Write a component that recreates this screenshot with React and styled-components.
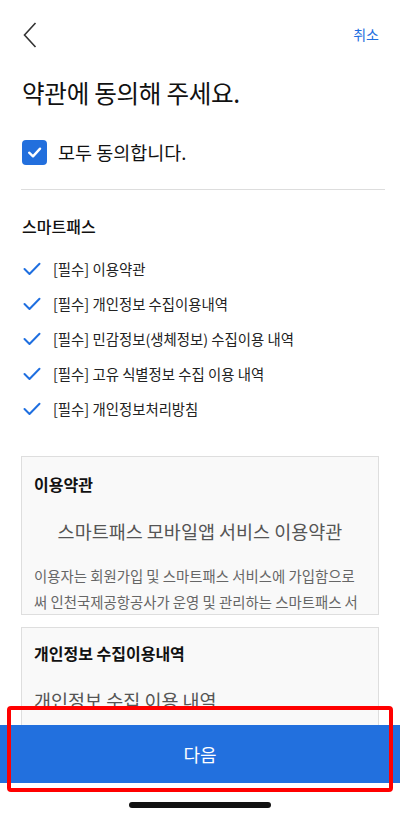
import styled, { createGlobalStyle } from 'styled-components';

const GlobalStyle = createGlobalStyle`
  html, body {
    margin: 0;
    padding: 0;
    background: #ffffff;
  }
  body {
    font-family: 'Noto Sans CJK KR', 'Noto Sans', sans-serif;
    color: #111;
  }
  * {
    box-sizing: border-box;
  }
`;

const terms = [
  '[필수] 이용약관',
  '[필수] 개인정보 수집이용내역',
  '[필수] 민감정보(생체정보) 수집이용 내역',
  '[필수] 고유 식별정보 수집 이용 내역',
  '[필수] 개인정보처리방침',
];

const BackIcon = () => (
  <svg width="14" height="26" viewBox="0 0 14 26" fill="none">
    <path d="M12.5 1 L1.5 13 L12.5 25" stroke="#333" strokeWidth="1.6" />
  </svg>
);

const CheckMark = ({ color = '#fff', size = 14 }) => (
  <svg width={size} height={size} viewBox="0 0 14 14" fill="none">
    <path
      d="M2 7.2 L5.6 10.6 L12.2 3.4"
      stroke={color}
      strokeWidth="2.2"
      strokeLinecap="round"
      strokeLinejoin="round"
    />
  </svg>
);

const App = () => {
  return (
    <>
      <GlobalStyle />
      <Page>
        <Content>
          <TopBar>
            <BackButton>
              <BackIcon />
            </BackButton>
            <Cancel>취소</Cancel>
          </TopBar>

          <Title>약관에 동의해 주세요.</Title>

          <AllAgree>
            <CheckBox>
              <CheckMark size={15} />
            </CheckBox>
            <AllLabel>모두 동의합니다.</AllLabel>
          </AllAgree>

          <Divider />

          <SectionTitle>스마트패스</SectionTitle>
          <TermList>
            {terms.map((t) => (
              <TermRow key={t}>
                <TickIcon>
                  <svg width="18" height="14" viewBox="0 0 18 14" fill="none">
                    <path
                      d="M1.5 7 L6.5 12 L16.5 1.8"
                      stroke="#1f6fe0"
                      strokeWidth="2"
                      strokeLinecap="round"
                      strokeLinejoin="round"
                    />
                  </svg>
                </TickIcon>
                <TermText>{t}</TermText>
              </TermRow>
            ))}
          </TermList>

          <Card>
            <CardTitle>이용약관</CardTitle>
            <CardHeading $center>스마트패스 모바일앱 서비스 이용약관</CardHeading>
            <CardBody>
              이용자는 회원가입 및 스마트패스 서비스에 가입함으로써 인천국제공항공사가 운영 및 관리하는
              스마트패스 서비스
            </CardBody>
          </Card>

          <Card $open>
            <CardTitle>개인정보 수집이용내역</CardTitle>
            <CardHeading>개인정보 수집 이용 내역</CardHeading>
          </Card>
        </Content>

        <NextButton>다음</NextButton>
        <HomeArea>
          <HomeBar />
        </HomeArea>
        <Highlight />
      </Page>
    </>
  );
};

export default App;

const Page = styled.div`
  position: relative;
  width: 400px;
  height: 816px;
  display: flex;
  flex-direction: column;
  overflow: hidden;
  background: #fff;
`;

const Content = styled.div`
  flex: 1;
  overflow: hidden;
  padding: 0 21px 0 21px;
`;

const TopBar = styled.div`
  height: 70px;
  display: flex;
  justify-content: space-between;
  align-items: center;
`;

const BackButton = styled.div`
  display: flex;
  align-items: center;
  padding-left: 2px;
  margin-top: -1px;
`;

const Cancel = styled.div`
  font-size: 14px;
  color: #1f6fe0;
  margin-top: -2px;
`;

const Title = styled.h1`
  margin: 5px 0 0 1px;
  font-size: 24.6px;
  font-weight: 400;
  line-height: 34px;
  color: #111;
  letter-spacing: -0.3px;
`;

const AllAgree = styled.div`
  display: flex;
  align-items: center;
  gap: 11px;
  margin-top: 30px;
  margin-left: 1px;
`;

const CheckBox = styled.div`
  width: 25px;
  height: 25px;
  border-radius: 4px;
  background: #226fdd;
  display: flex;
  align-items: center;
  justify-content: center;
`;

const AllLabel = styled.div`
  font-size: 18.5px;
  color: #111;
  line-height: 26px;
`;

const Divider = styled.div`
  height: 1px;
  background: #dddddd;
  margin-top: 24px;
  margin-right: -6px;
`;

const SectionTitle = styled.div`
  margin-top: 25px;
  margin-left: 1px;
  font-size: 16px;
  font-weight: 500;
  line-height: 22px;
`;

const TermList = styled.div`
  margin-top: 21px;
  display: flex;
  flex-direction: column;
  gap: 13px;
`;

const TermRow = styled.div`
  display: flex;
  align-items: center;
  height: 22px;
`;

const TickIcon = styled.div`
  width: 32px;
  padding-left: 2px;
  display: flex;
  align-items: center;
`;

const TermText = styled.div`
  font-size: 14.4px;
  color: #222;
  line-height: 20px;
`;

const Card = styled.div`
  margin-top: ${(p) => (p.$open ? '12px' : '36px')};
  width: 358px;
  height: ${(p) => (p.$open ? '200px' : '159px')};
  border: 1px solid #dedede;
  background: #f9f9f9;
  padding: ${(p) => (p.$open ? '13px' : '15px')} 12px 0 12px;
  overflow: hidden;
`;

const CardTitle = styled.div`
  font-size: 16px;
  font-weight: 700;
  line-height: 24px;
  color: #111;
`;

const CardHeading = styled.div`
  margin-top: 22px;
  font-size: 18.5px;
  line-height: 26px;
  color: #555;
  text-align: ${(p) => (p.$center ? 'center' : 'left')};
`;

const CardBody = styled.div`
  margin-top: 19px;
  font-size: 14.4px;
  line-height: 26px;
  color: #666;
  word-break: break-all;
`;

const NextButton = styled.button`
  height: 58px;
  width: 100%;
  border: none;
  background: #2270de;
  color: #fff;
  font-family: 'Noto Sans CJK KR', sans-serif;
  font-size: 18px;
  display: flex;
  align-items: center;
  justify-content: center;
`;

const HomeArea = styled.div`
  height: 33px;
  display: flex;
  justify-content: center;
  padding-top: 19px;
`;

const HomeBar = styled.div`
  width: 142px;
  height: 6px;
  border-radius: 3px;
  background: #111;
`;

const Highlight = styled.div`
  position: absolute;
  left: 7px;
  top: 706px;
  width: 386px;
  height: 86px;
  border: 4px solid #ff0000;
  border-radius: 4px;
  pointer-events: none;
`;
